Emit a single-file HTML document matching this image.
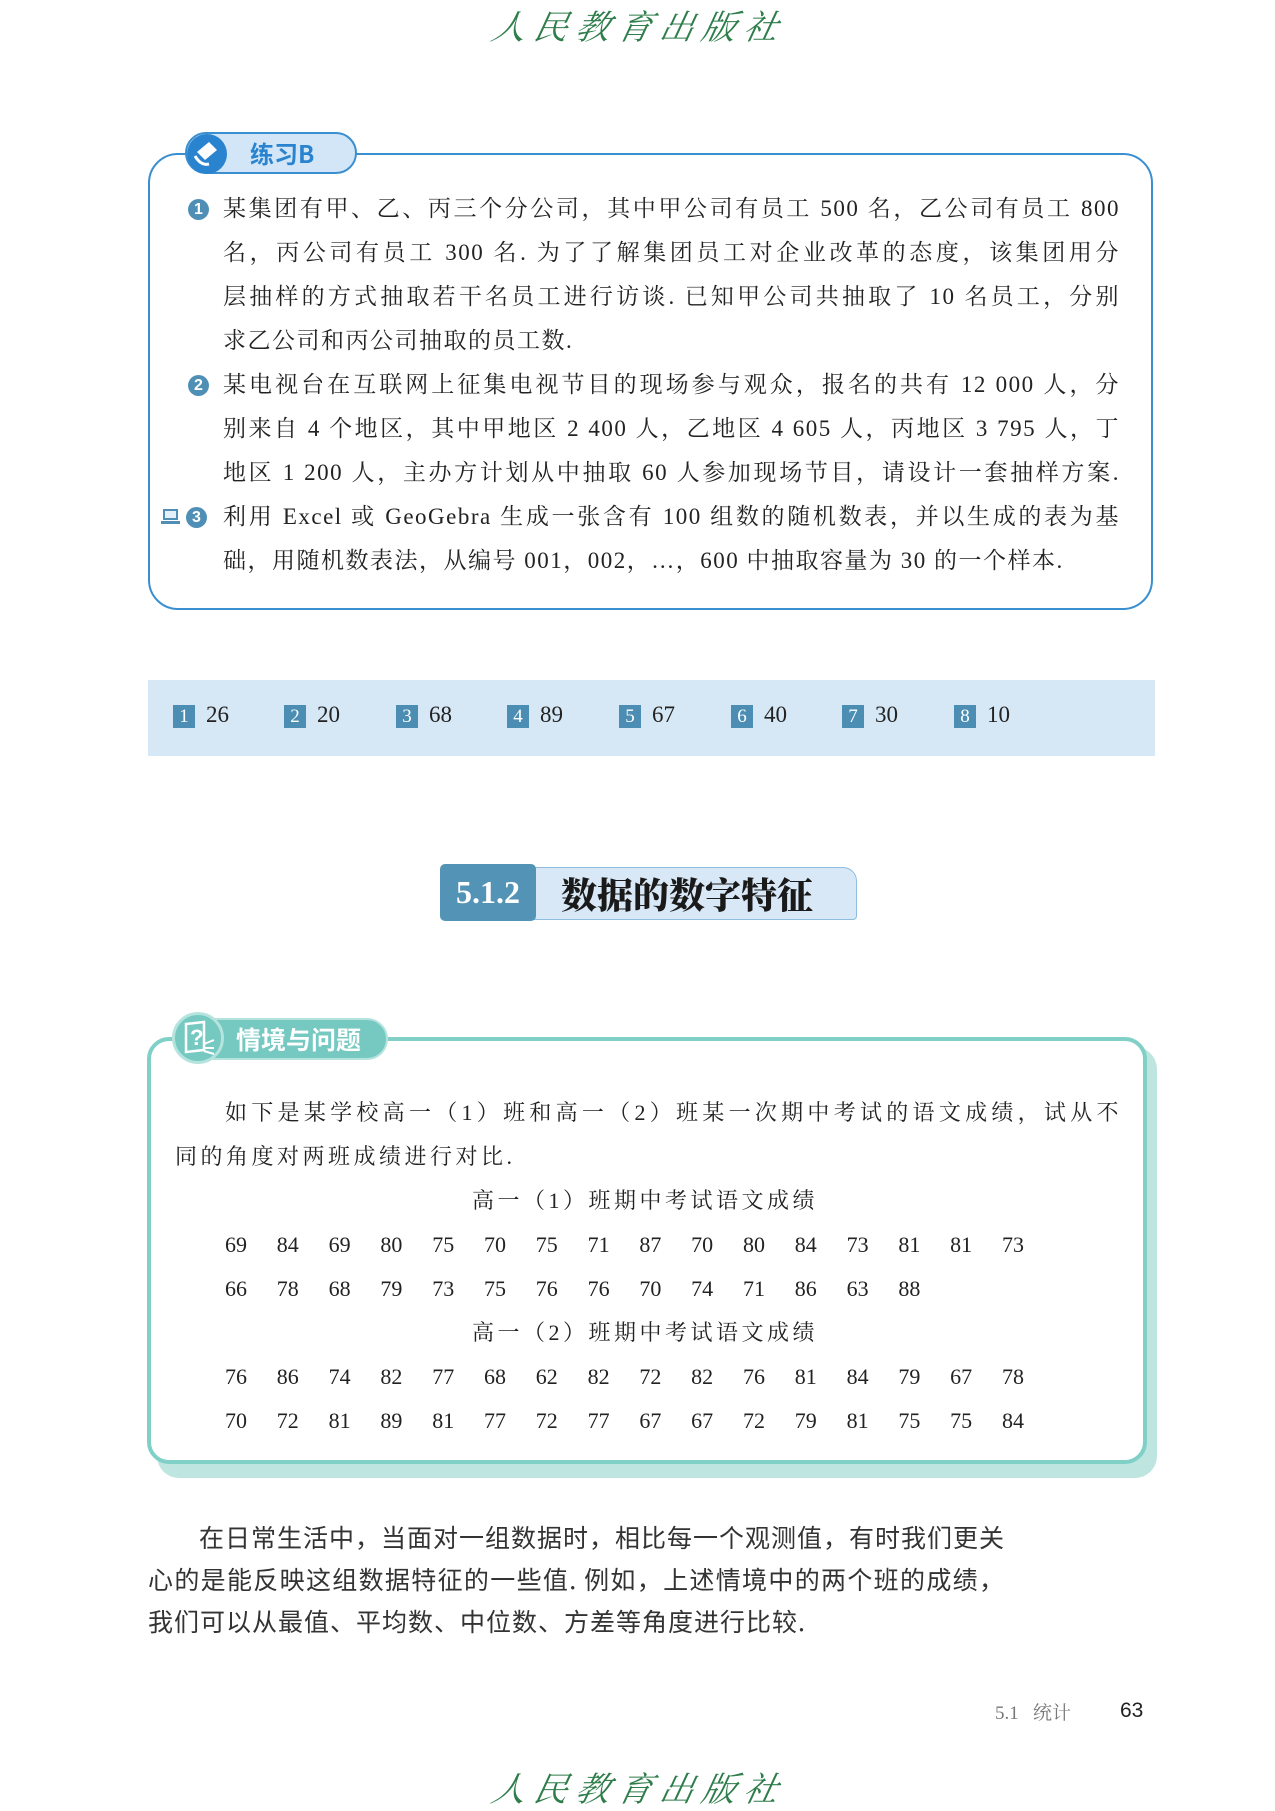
<!DOCTYPE html>
<html><head><meta charset="utf-8"><style>
*{margin:0;padding:0;box-sizing:border-box}
body{width:1275px;height:1800px;background:#fff;position:relative;overflow:hidden;font-family:"Liberation Serif","Noto Serif CJK SC",serif;color:#222}
.abs{position:absolute}
.logo{position:absolute;left:490px;width:300px;text-align:center;font-family:"Noto Serif CJK SC",serif;font-style:italic;color:#2e7d4a;font-size:34px;letter-spacing:8px;transform:skewX(-12deg)}
.box1{left:148px;top:153px;width:1005px;height:457px;border:2px solid #3a8fd0;border-radius:30px}
.l1{position:absolute;left:223px;width:897px;font-size:23px;height:44px;line-height:44px;text-align:justify;text-align-last:justify;white-space:nowrap;letter-spacing:1.5px}
.l1.last{text-align-last:left}
.num{position:absolute;width:21px;height:21px;border-radius:50%;background:#4f8fb6;color:#fff;font-size:16px;line-height:21px;text-align:center;font-family:"Liberation Sans",sans-serif;font-weight:bold}
.bar{left:148px;top:680px;width:1007px;height:76px;background:#d6e7f5}
.ans{position:absolute;top:703px;font-size:23px;line-height:23px}
.ans b{display:inline-block;width:22px;height:23px;background:#4b8db3;color:#fff;font-weight:normal;text-align:center;font-size:19px;line-height:23px;margin-right:11px}
.box2{left:147px;top:1037px;width:1000px;height:427px;border:4px solid #80d0c8;border-radius:22px;background:#fff}
.shadow{left:157px;top:1047px;width:1000px;height:431px;background:#bfe5e0;border-radius:22px}
.t2{position:absolute;font-size:22px;line-height:44px;white-space:nowrap;letter-spacing:1.5px}
.j{text-align:justify;text-align-last:justify}
.row{position:absolute;left:225px;font-size:22px;line-height:44px;white-space:nowrap}
.row span{display:inline-block;width:51.8px}
.p{position:absolute;left:148px;font-family:"Noto Sans CJK SC",sans-serif;font-size:25px;letter-spacing:1px;line-height:42px;white-space:nowrap;color:#333}
</style></head><body>
<div class="logo" style="top:0">人民教育出版社</div>

<div class="abs box1"></div>
<div class="abs" style="left:185px;top:132px;width:172px;height:42px;border:2px solid #3a8fd0;border-radius:21px;background:#d2e6f7"></div>
<div class="abs" style="left:187px;top:134px;width:40px;height:40px;border-radius:50%;background:#2a83cf"></div>
<svg class="abs" style="left:187px;top:134px" width="40" height="40"><path d="M10 18 L22 8 L30 16 L18 26 Z" fill="#fff"/><path d="M8 22 Q14 32 22 30" stroke="#fff" stroke-width="3" fill="none"/></svg>
<div class="abs" style="left:250px;top:137px;font-family:'Noto Sans CJK SC',sans-serif;font-weight:bold;font-size:24px;color:#2a83cf;line-height:32px">练习B</div>

<div class="num" style="left:188px;top:199px">1</div>
<div class="l1" style="top:187px">某集团有甲、乙、丙三个分公司，其中甲公司有员工 500 名，乙公司有员工 800</div>
<div class="l1" style="top:231px">名，丙公司有员工 300 名. 为了了解集团员工对企业改革的态度，该集团用分</div>
<div class="l1" style="top:275px">层抽样的方式抽取若干名员工进行访谈. 已知甲公司共抽取了 10 名员工，分别</div>
<div class="l1 last" style="top:319px">求乙公司和丙公司抽取的员工数.</div>
<div class="num" style="left:188px;top:375px">2</div>
<div class="l1" style="top:363px">某电视台在互联网上征集电视节目的现场参与观众，报名的共有 12 000 人，分</div>
<div class="l1" style="top:407px">别来自 4 个地区，其中甲地区 2 400 人，乙地区 4 605 人，丙地区 3 795 人，丁</div>
<div class="l1" style="top:451px">地区 1 200 人，主办方计划从中抽取 60 人参加现场节目，请设计一套抽样方案.</div>
<div class="abs" style="left:163px;top:509px;width:15px;height:11px;border:2px solid #4f8fb6;background:#e6f0f8"></div>
<div class="abs" style="left:161px;top:521px;width:19px;height:3px;background:#4f8fb6"></div>
<div class="num" style="left:186px;top:507px">3</div>
<div class="l1" style="top:495px">利用 Excel 或 GeoGebra 生成一张含有 100 组数的随机数表，并以生成的表为基</div>
<div class="l1 last" style="top:539px">础，用随机数表法，从编号 001，002，…，600 中抽取容量为 30 的一个样本.</div>

<div class="abs bar"></div>
<div class="ans" style="left:173px"><b>1</b>26</div>
<div class="ans" style="left:284px"><b>2</b>20</div>
<div class="ans" style="left:396px"><b>3</b>68</div>
<div class="ans" style="left:507px"><b>4</b>89</div>
<div class="ans" style="left:619px"><b>5</b>67</div>
<div class="ans" style="left:731px"><b>6</b>40</div>
<div class="ans" style="left:842px"><b>7</b>30</div>
<div class="ans" style="left:954px"><b>8</b>10</div>

<div class="abs" style="left:523px;top:867px;width:334px;height:53px;background:#d8e8f6;border:1px solid #8dbde3;border-radius:0 14px 4px 0"></div>
<div class="abs" style="left:440px;top:864px;width:96px;height:57px;background:#5293b6;border-radius:5px;color:#fff;font-family:'Liberation Serif',serif;font-weight:bold;font-size:32px;line-height:57px;text-align:center">5.1.2</div>
<div class="abs" style="left:561px;top:867px;font-family:'Noto Serif CJK SC',serif;font-weight:900;font-size:36px;line-height:53px;color:#1a1a1a">数据的数字特征</div>

<div class="abs shadow"></div>
<div class="abs box2"></div>
<div class="abs" style="left:178px;top:1018px;width:210px;height:42px;border-radius:21px;background:#76c9c1;border:2px solid #b5e3de"></div>
<div class="abs" style="left:172px;top:1012px;width:52px;height:52px;border-radius:50%;background:#76c9c1;border:3px solid #b5e3de"></div>
<svg class="abs" style="left:182px;top:1020px" width="34" height="36"><path d="M4 4 L22 2 L22 30 L4 32 Z" fill="none" stroke="#fff" stroke-width="2.5"/><text x="8" y="25" fill="#fff" font-size="22" font-family="Liberation Sans" font-weight="bold">?</text><path d="M22 24 L32 20 M22 28 L32 28 M22 31 L32 34" stroke="#fff" stroke-width="2"/></svg>
<div class="abs" style="left:236px;top:1022px;font-family:'Noto Sans CJK SC',sans-serif;font-weight:bold;font-size:25px;color:#fff;line-height:34px">情境与问题</div>

<div class="t2 j" style="left:225px;top:1091px;width:895px">如下是某学校高一（1）班和高一（2）班某一次期中考试的语文成绩，试从不</div>
<div class="t2" style="left:175px;top:1135px;letter-spacing:3.5px">同的角度对两班成绩进行对比.</div>
<div class="t2" style="left:472px;top:1179px;letter-spacing:3.5px">高一（1）班期中考试语文成绩</div>
<div class="row" style="top:1223px"><span>69</span><span>84</span><span>69</span><span>80</span><span>75</span><span>70</span><span>75</span><span>71</span><span>87</span><span>70</span><span>80</span><span>84</span><span>73</span><span>81</span><span>81</span><span>73</span></div>
<div class="row" style="top:1267px"><span>66</span><span>78</span><span>68</span><span>79</span><span>73</span><span>75</span><span>76</span><span>76</span><span>70</span><span>74</span><span>71</span><span>86</span><span>63</span><span>88</span></div>
<div class="t2" style="left:472px;top:1311px;letter-spacing:3.5px">高一（2）班期中考试语文成绩</div>
<div class="row" style="top:1355px"><span>76</span><span>86</span><span>74</span><span>82</span><span>77</span><span>68</span><span>62</span><span>82</span><span>72</span><span>82</span><span>76</span><span>81</span><span>84</span><span>79</span><span>67</span><span>78</span></div>
<div class="row" style="top:1399px"><span>70</span><span>72</span><span>81</span><span>89</span><span>81</span><span>77</span><span>72</span><span>77</span><span>67</span><span>67</span><span>72</span><span>79</span><span>81</span><span>75</span><span>75</span><span>84</span></div>

<div class="p j" style="top:1516px;left:199px;width:806px">在日常生活中，当面对一组数据时，相比每一个观测值，有时我们更关</div>
<div class="p j" style="top:1558px;width:857px">心的是能反映这组数据特征的一些值. 例如，上述情境中的两个班的成绩，</div>
<div class="p" style="top:1600px">我们可以从最值、平均数、中位数、方差等角度进行比较.</div>

<div class="abs" style="left:995px;top:1700px;font-size:19px;color:#777;line-height:24px;white-space:nowrap">5.1&nbsp;&nbsp;&nbsp;<span style="font-family:'Noto Serif CJK SC',serif">统计</span></div>
<div class="abs" style="left:1120px;top:1698px;font-family:'Liberation Sans',sans-serif;font-size:21px;color:#222;line-height:26px">63</div>

<div class="logo" style="top:1762px">人民教育出版社</div>
</body></html>
